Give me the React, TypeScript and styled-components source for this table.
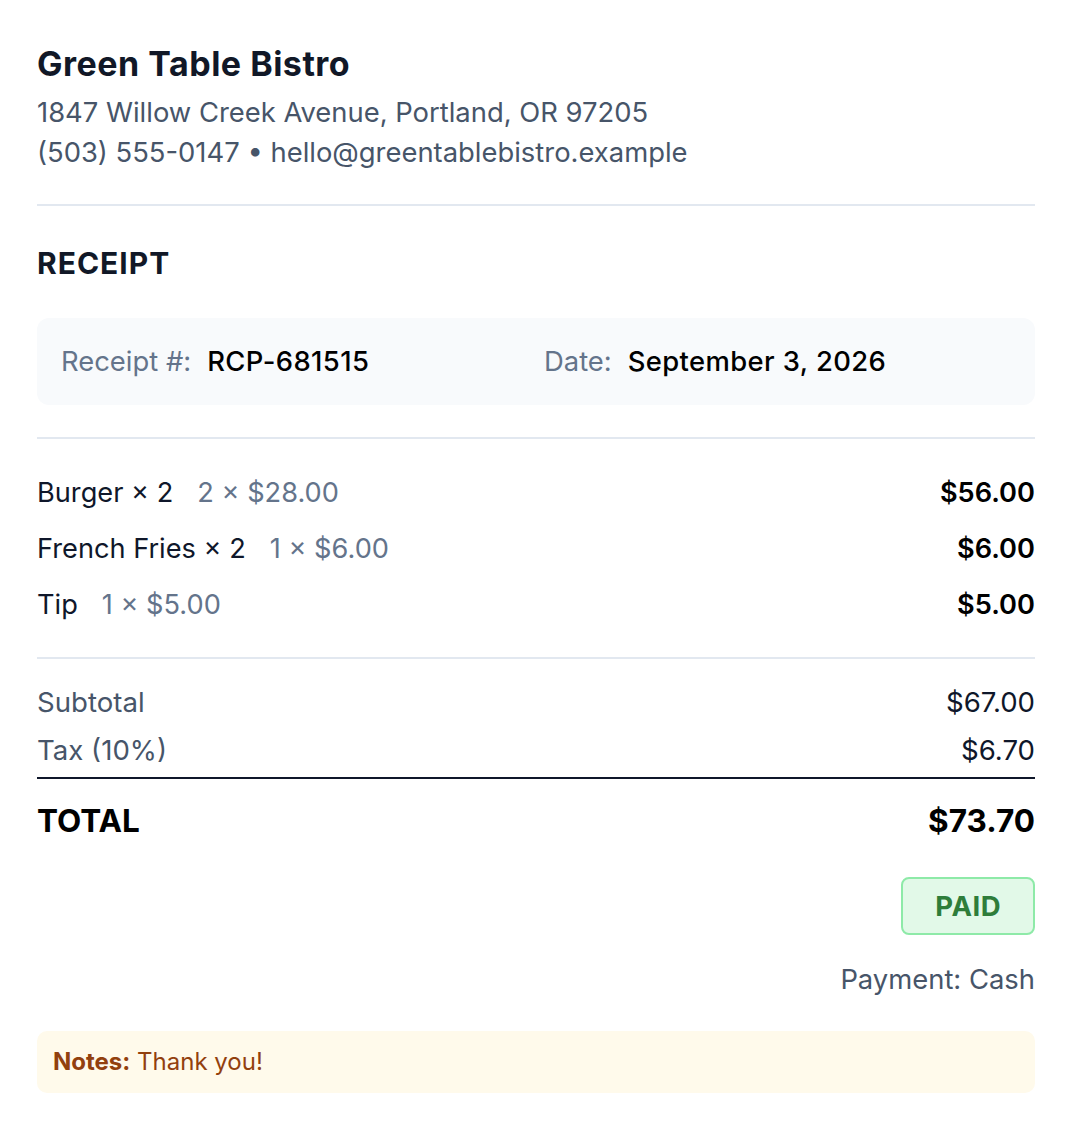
import React from "react";
import styled, { createGlobalStyle } from "styled-components";

const GlobalStyle = createGlobalStyle`
  body {
    margin: 0;
    background: #ffffff;
    font-family: Inter, "Noto Sans", sans-serif;
    color: #0f172a;
  }
`;

const Page = styled.div`
  width: 998px;
  margin-left: 37px;
  padding: 44px 0 40px;
`;

const Header = styled.header`
  padding-bottom: 32px;
  border-bottom: 2px solid #e2e8f0;
`;

const Title = styled.h1`
  margin: 0 0 8px;
  font-size: 34px;
  line-height: 40px;
  font-weight: 700;
  letter-spacing: 0.5px;
  color: #111827;
`;

const HeaderLine = styled.div`
  font-size: 27.4px;
  line-height: 40px;
  color: #475569;
`;

const Heading = styled.h2`
  margin: 39px 0 37px;
  font-size: 30px;
  line-height: 36px;
  font-weight: 700;
  letter-spacing: 1px;
  color: #111827;
`;

const InfoBox = styled.div`
  display: grid;
  grid-template-columns: 1fr 1fr;
  column-gap: 16px;
  padding: 24px;
  background: #f8fafc;
  border-radius: 12px;
  font-size: 27.4px;
  line-height: 39px;
`;

const Label = styled.span`
  color: #64748b;
  margin-right: 16px;
`;

const Value = styled.span`
  color: #000000;
  font-weight: 500;
  letter-spacing: 0.4px;
`;

const Section = styled.section<{ $pad: string; $gap: number }>`
  margin-top: ${(p) => p.$gap}px;
  padding: ${(p) => p.$pad};
  border-top: 2px solid #e2e8f0;
`;

const ItemRow = styled.div`
  display: flex;
  justify-content: space-between;
  align-items: center;
  height: 56px;
  font-size: 27.2px;
`;

const ItemName = styled.span`
  color: #0f172a;
`;

const ItemDetail = styled.span`
  color: #64748b;
  margin-left: 24px;
`;

const Price = styled.span`
  font-weight: 600;
  color: #000000;
`;

const TotalsRow = styled.div`
  display: flex;
  justify-content: space-between;
  font-size: 27.6px;
  line-height: 48px;
`;

const TotalsLabel = styled.span`
  color: #475569;
`;

const TotalsValue = styled.span`
  color: #0f172a;
`;

const GrandRow = styled.div`
  display: flex;
  justify-content: space-between;
  margin-top: 3px;
  padding-top: 22px;
  border-top: 2px solid #0f172a;
  font-size: 31.5px;
  line-height: 40px;
  font-weight: 700;
  color: #000000;
`;

const Status = styled.div`
  display: flex;
  flex-direction: column;
  align-items: flex-end;
  margin-top: 36px;
`;

const Badge = styled.div`
  box-sizing: border-box;
  height: 58px;
  padding: 0 32px;
  display: flex;
  align-items: center;
  background: #e2f9e8;
  border: 2px solid #8eeaa8;
  border-radius: 8px;
  color: #2e7d3a;
  font-size: 27.5px;
  font-weight: 700;
  letter-spacing: 0.5px;
`;

const Payment = styled.div`
  margin-top: 25px;
  font-size: 27.4px;
  line-height: 39px;
  color: #475569;
`;

const Notes = styled.div`
  margin-top: 32px;
  padding: 14px 16px;
  background: #fffaeb;
  border-radius: 10px;
  font-size: 24px;
  line-height: 34px;
  color: #92400e;
`;

const items = [
  { name: "Burger × 2", detail: "2 × $28.00", price: "$56.00" },
  { name: "French Fries × 2", detail: "1 × $6.00", price: "$6.00" },
  { name: "Tip", detail: "1 × $5.00", price: "$5.00" },
];

export default function App() {
  return (
    <>
      <GlobalStyle />
      <Page>
        <Header>
          <Title>Green Table Bistro</Title>
          <HeaderLine>1847 Willow Creek Avenue, Portland, OR 97205</HeaderLine>
          <HeaderLine>(503) 555-0147 • hello@greentablebistro.example</HeaderLine>
        </Header>

        <Heading>RECEIPT</Heading>

        <InfoBox>
          <div>
            <Label>Receipt #:</Label>
            <Value>RCP-681515</Value>
          </div>
          <div>
            <Label>Date:</Label>
            <Value>September 3, 2026</Value>
          </div>
        </InfoBox>

        <Section $pad="25px 0" $gap={32}>
          {items.map((item) => (
            <ItemRow key={item.name}>
              <span>
                <ItemName>{item.name}</ItemName>
                <ItemDetail>{item.detail}</ItemDetail>
              </span>
              <Price>{item.price}</Price>
            </ItemRow>
          ))}
        </Section>

        <Section $pad="19px 0 0" $gap={0}>
          <TotalsRow>
            <TotalsLabel>Subtotal</TotalsLabel>
            <TotalsValue>$67.00</TotalsValue>
          </TotalsRow>
          <TotalsRow>
            <TotalsLabel>Tax (10%)</TotalsLabel>
            <TotalsValue>$6.70</TotalsValue>
          </TotalsRow>
          <GrandRow>
            <span>TOTAL</span>
            <span>$73.70</span>
          </GrandRow>
        </Section>

        <Status>
          <Badge>PAID</Badge>
          <Payment>Payment: Cash</Payment>
        </Status>

        <Notes>
          <strong>Notes:</strong> Thank you!
        </Notes>
      </Page>
    </>
  );
}
